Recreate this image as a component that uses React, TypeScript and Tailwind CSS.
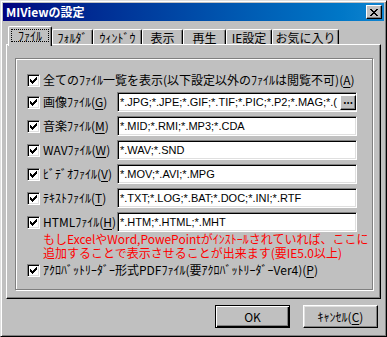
import React from "react";

const FONT = { fontFamily: '"Noto Sans CJK JP", "Noto Sans", sans-serif' };

const CHECK_ROWS: [number, number][][] = [
  [[6, 1]],
  [[5, 2]],
  [[0, 1], [4, 3]],
  [[0, 2], [3, 3]],
  [[0, 5]],
  [[1, 3]],
  [[2, 1]],
];

const Checkbox = () => (
  <div className="w-[13px] h-[13px] shrink-0 bg-white border border-t-[#808080] border-l-[#808080] border-r-white border-b-white shadow-[inset_1px_1px_0_#000,inset_-1px_-1px_0_#dfdfdf] flex items-center justify-center">
    <svg width="7" height="7" viewBox="0 0 7 7" shapeRendering="crispEdges">
      {CHECK_ROWS.map((segs, y) =>
        segs.map(([x, w]) => <rect key={`${y}-${x}`} x={x} y={y} width={w} height={1} fill="#000" />)
      )}
    </svg>
  </div>
);

const Accel = ({ pre, k, post = ")" }: { pre: string; k: string; post?: string }) => (
  <>
    {pre}
    <span className="underline underline-offset-2">{k}</span>
    {post}
  </>
);

const TextBox = ({ value, browse }: { value: string; browse?: boolean }) => (
  <div className="w-[240px] h-[20px] bg-white border border-t-[#808080] border-l-[#808080] border-r-white border-b-white shadow-[inset_1px_1px_0_#000,inset_-1px_-1px_0_#dfdfdf] flex items-center">
    <span
      className="flex-1 min-w-0 overflow-hidden pl-[2px] text-[11px] text-black whitespace-nowrap"
      style={{ fontFamily: '"Liberation Sans", Arial, sans-serif' }}
    >
      {value}
    </span>
    {browse && (
      <div className="shrink-0 w-[16px] h-[15px] bg-[#c0c0c0] border border-t-white border-l-white border-r-black border-b-black shadow-[inset_-1px_-1px_0_#808080] flex items-center justify-center">
        <span className="text-[10px] font-bold leading-none -mt-[4px]">...</span>
      </div>
    )}
  </div>
);

const FileRow = ({ label, value, browse }: { label: React.ReactNode; value: string; browse?: boolean }) => (
  <div className="flex items-center h-[20px]">
    <Checkbox />
    <span className="ml-[3px] w-[74px] whitespace-nowrap">{label}</span>
    <TextBox value={value} browse={browse} />
  </div>
);

const tabs = [
  { label: "ﾌｧｲﾙ", w: "w-[44px]" },
  { label: "ﾌｫﾙﾀﾞ", w: "w-[41px]" },
  { label: "ｳｨﾝﾄﾞｳ", w: "w-[49px]" },
  { label: "表示", w: "w-[41px]" },
  { label: "再生", w: "w-[43px]" },
  { label: "IE設定", w: "w-[46px]" },
  { label: "お気に入り", w: "w-[67px]" },
];

export default function App() {
  return (
    <div
      className="w-[387px] h-[337px] bg-[#c0c0c0] border border-t-[#dfdfdf] border-l-[#dfdfdf] border-r-black border-b-black shadow-[inset_1px_1px_0_#fff,inset_-1px_-1px_0_#808080] p-[2px] text-[12px] text-black leading-none overflow-hidden"
      style={FONT}
    >
      {/* title bar */}
      <div className="h-[18px] flex items-center justify-between bg-gradient-to-r from-[#000080] to-[#1084d0] pl-[3px] pr-[2px]">
        <span className="text-white font-bold text-[12px]">MIViewの設定</span>
        <div className="w-[16px] h-[14px] bg-[#c0c0c0] border border-t-white border-l-white border-r-black border-b-black shadow-[inset_-1px_-1px_0_#808080] flex items-center justify-center">
          <svg width="8" height="7" viewBox="0 0 8 7" shapeRendering="crispEdges">
            <path d="M0 0h2v1h-2zM6 0h2v1h-2zM1 1h2v1h-2zM5 1h2v1h-2zM2 2h4v1h-4zM3 3h2v1h-2zM2 4h4v1h-4zM1 5h2v1h-2zM5 5h2v1h-2zM0 6h2v1h-2zM6 6h2v1h-2z" fill="#000" />
          </svg>
        </div>
      </div>

      <div className="px-[3px] pt-[5px]">
        {/* tabs */}
        <div className="relative z-10 flex items-end h-[18px] pl-[2px]">
          {tabs.map((t, i) =>
            i === 0 ? (
              <div
                key={t.label}
                className={`${t.w} h-[20px] -mb-[2px] bg-[#c0c0c0] border-l border-t border-white rounded-tl-[2px] rounded-tr-[2px] border-r border-r-black shadow-[inset_-1px_0_0_#808080] px-[2px] pt-[2px] pb-[4px]`}
              >
                <div className="h-full border border-dotted border-black flex items-center justify-center">{t.label}</div>
              </div>
            ) : (
              <div
                key={t.label}
                className={`${t.w} h-[15px] border-l border-t border-white rounded-tl-[2px] rounded-tr-[2px] border-r border-r-black shadow-[inset_-1px_0_0_#808080] flex items-center justify-center pt-[1px]`}
              >
                {t.label}
              </div>
            )
          )}
        </div>

        {/* tab panel */}
        <div className="h-[255px] border border-t-white border-l-white border-r-black border-b-black shadow-[inset_-1px_-1px_0_#808080] pt-[13px] pl-[8px]">
          <div className="w-[358px] h-[232px] border border-[#808080] shadow-[1px_1px_0_#fff,inset_1px_1px_0_#fff] pt-[13px] pl-[11px] flex flex-col gap-[4px]">
            <div className="flex items-center h-[16px]">
              <Checkbox />
              <span className="ml-[3px] whitespace-nowrap">
                全てのﾌｧｲﾙ一覧を表示(以下設定以外のﾌｧｲﾙは閲覧不可)<Accel pre="(" k="A" />
              </span>
            </div>
            <FileRow
              label={<Accel pre="画像ﾌｧｲﾙ(" k="G" />}
              value="*.JPG;*.JPE;*.GIF;*.TIF;*.PIC;*.P2;*.MAG;*.("
              browse
            />
            <FileRow label={<Accel pre="音楽ﾌｧｲﾙ(" k="M" />} value="*.MID;*.RMI;*.MP3;*.CDA" />
            <FileRow label={<Accel pre="WAVﾌｧｲﾙ(" k="W" />} value="*.WAV;*.SND" />
            <FileRow label={<Accel pre="ﾋﾞﾃﾞｵﾌｧｲﾙ(" k="V" />} value="*.MOV;*.AVI;*.MPG" />
            <FileRow label={<Accel pre="ﾃｷｽﾄﾌｧｲﾙ(" k="T" />} value="*.TXT;*.LOG;*.BAT;*.DOC;*.INI;*.RTF" />
            <FileRow label={<Accel pre="HTMLﾌｧｲﾙ(" k="H" />} value="*.HTM;*.HTML;*.MHT" />
            <div className="-mt-[4px] ml-[16px] text-[#ff0000] leading-[14px] whitespace-nowrap">
              <div>もしExcelやWord,PowePointがｲﾝｽﾄｰﾙされていれば、ここに</div>
              <div>追加することで表示させることが出来ます(要IE5.0以上)</div>
            </div>
            <div className="-mt-[2px] flex items-center h-[16px]">
              <Checkbox />
              <span className="ml-[3px] whitespace-nowrap">
                ｱｸﾛﾊﾞｯﾄﾘｰﾀﾞｰ形式PDFﾌｧｲﾙ(要ｱｸﾛﾊﾞｯﾄﾘｰﾀﾞｰVer4)<Accel pre="(" k="P" />
              </span>
            </div>
          </div>
        </div>

        {/* buttons */}
        <div className="flex justify-end gap-[13px] mt-[6px] pr-[3px]">
          <div className="w-[75px] h-[23px] border border-black shadow-[inset_1px_1px_0_#fff,inset_-1px_-1px_0_#000,inset_-2px_-2px_0_#808080] flex items-center justify-center">
            OK
          </div>
          <div className="w-[75px] h-[23px] border border-t-white border-l-white border-r-black border-b-black shadow-[inset_-1px_-1px_0_#808080,inset_1px_1px_0_#dfdfdf] flex items-center justify-center">
            <Accel pre="ｷｬﾝｾﾙ(" k="C" />
          </div>
        </div>
      </div>
    </div>
  );
}
